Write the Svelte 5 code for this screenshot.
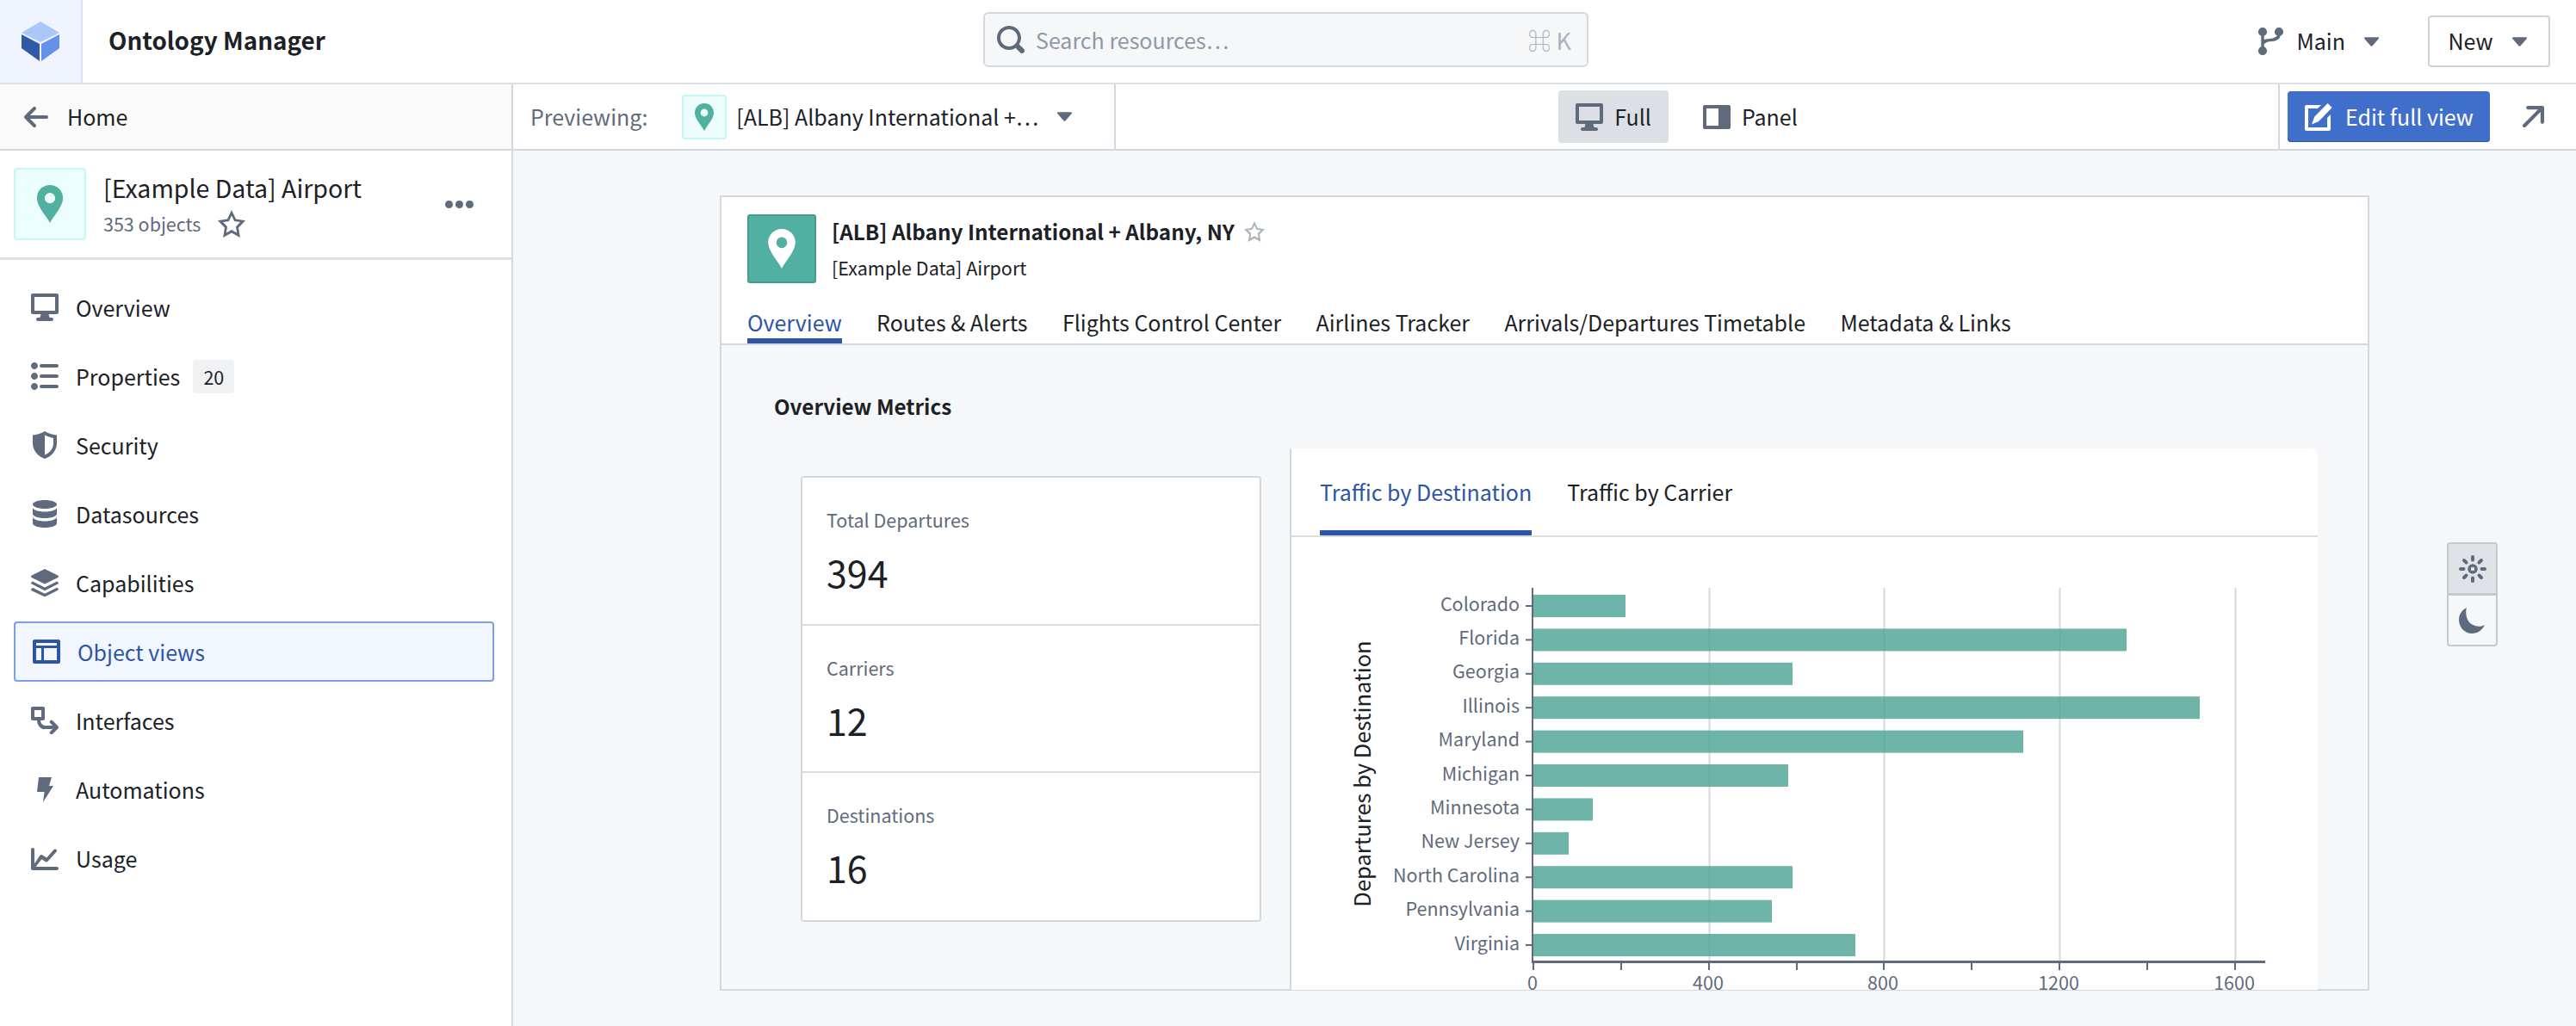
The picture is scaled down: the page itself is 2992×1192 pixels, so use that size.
<script>
  const nav = [
    { label: 'Overview', icon: 'desktop' },
    { label: 'Properties', icon: 'props', badge: '20' },
    { label: 'Security', icon: 'shield' },
    { label: 'Datasources', icon: 'db' },
    { label: 'Capabilities', icon: 'layers' },
    { label: 'Object views', icon: 'layout', active: true },
    { label: 'Interfaces', icon: 'iface' },
    { label: 'Automations', icon: 'bolt' },
    { label: 'Usage', icon: 'chart' }
  ];
  const tabs = ['Overview', 'Routes & Alerts', 'Flights Control Center', 'Airlines Tracker', 'Arrivals/Departures Timetable', 'Metadata & Links'];
  const metrics = [
    { label: 'Total Departures', value: '394' },
    { label: 'Carriers', value: '12' },
    { label: 'Destinations', value: '16' }
  ];
  const bars = [
    ['Colorado', 107], ['Florida', 689], ['Georgia', 301], ['Illinois', 774], ['Maryland', 569],
    ['Michigan', 296], ['Minnesota', 69], ['New Jersey', 41], ['North Carolina', 301], ['Pennsylvania', 277], ['Virginia', 374]
  ];
  const gridX = [204, 407, 611, 815];
  const xLabels = [[0, '0'], [204, '400'], [407, '800'], [611, '1200'], [815, '1600']];
  const minor = [0, 102, 204, 306, 407, 509, 611, 713, 815];
  const paths = {
    desktop: 'M15 0H1C.45 0 0 .45 0 1v10c0 .55.45 1 1 1h4.75l-.5 2H4c-.55 0-1 .45-1 1s.45 1 1 1h8c.55 0 1-.45 1-1s-.45-1-1-1h-1.25l-.5-2H15c.55 0 1-.45 1-1V1c0-.55-.45-1-1-1zm-1 10H2V2h12v8z',
    props: 'M2 6C.9 6 0 6.9 0 8s.9 2 2 2 2-.9 2-2-.9-2-2-2zm4-3h9c.55 0 1-.45 1-1s-.45-1-1-1H6c-.55 0-1 .45-1 1s.45 1 1 1zm-4 9c-1.1 0-2 .9-2 2s.9 2 2 2 2-.9 2-2-.9-2-2-2zM2 0C.9 0 0 .9 0 2s.9 2 2 2 2-.9 2-2-.9-2-2-2zm13 7H6c-.55 0-1 .45-1 1s.45 1 1 1h9c.55 0 1-.45 1-1s-.45-1-1-1zm0 6H6c-.55 0-1 .45-1 1s.45 1 1 1h9c.55 0 1-.45 1-1s-.45-1-1-1z',
    shield: 'M8 0C6 1.2 3.5 2 1 2.2V7c0 4 3 7.600 7 9 4-1.400 7-5 7-9V2.200C12.500 2 10 1.200 8 0zm0 2.300c1.500.8 3.200 1.400 5 1.700V7c0 2.900-2 5.500-5 6.800V2.300z',
    db: 'M8 5c3.900 0 7-1.100 7-2.500S11.900 0 8 0 1 1.100 1 2.500 4.100 5 8 5zm0 1.700C4.100 6.700 1 5.600 1 4.200V8c0 1.400 3.100 2.500 7 2.500S15 9.400 15 8V4.200c0 1.400-3.100 2.500-7 2.500zm0 5.500c-3.900 0-7-1.100-7-2.500v3.800C1 14.900 4.100 16 8 16s7-1.100 7-2.500V9.700c0 1.400-3.100 2.500-7 2.500z',
    layers: 'M8 0 .4 3.800c-.5.3-.5.9 0 1.200L8 8.800 15.600 5c.5-.3.5-.9 0-1.200L8 0zM1 7.300l-.6.300c-.5.3-.5.9 0 1.200L8 12.600l7.600-3.800c.5-.3.5-.9 0-1.200l-.6-.3-7 3.500-7-3.500zm0 3.800-.6.300c-.5.300-.5.900 0 1.200L8 16.200l7.600-3.800c.5-.3.5-.9 0-1.200l-.6-.3-7 3.500-7-3.500z',
    layout: 'M15 1H1c-.5 0-1 .5-1 1v12c0 .5.5 1 1 1h14c.5 0 1-.5 1-1V2c0-.5-.5-1-1-1zM2 6h3v7H2V6zm12 7H6.500V6H14v7zM2 4.500V3h12v1.500H2z',
    iface: 'M1 0h6c.6 0 1 .4 1 1v6c0 .6-.4 1-1 1H5.500c.2 1.800 1.300 3 3 3h4.100l-1.300-1.300a1 1 0 1 1 1.400-1.400l3 3c.4.400.4 1 0 1.400l-3 3a1 1 0 1 1-1.400-1.400l1.300-1.300H8.500C5.500 13.500 3.700 11 3.500 8H1c-.6 0-1-.4-1-1V1c0-.6.4-1 1-1zm1 2v4h4V2H2z',
    bolt: 'M4.500 1h7.500L10.500 6h2.500L7 15.500l.8-6H3.500L4.500 1z',
    chart: 'M1 2c.6 0 1 .4 1 1v8.200l3.300-4.900c.2-.3.6-.4 1-.3l2.800 1.700L13.300 3c.4-.4 1-.4 1.400 0s.4 1 0 1.400l-5 5.500c-.3.3-.8.4-1.200.2L6.200 8.600 2.800 13H15c.6 0 1 .4 1 1s-.4 1-1 1H1c-.6 0-1-.4-1-1V3c0-.6.4-1 1-1z'
  };
  const pin = 'M8 0C4.900 0 2.500 2.400 2.500 5.500 2.500 9 6.500 13 8 16c1.500-3 5.500-7 5.500-10.500C13.500 2.400 11.100 0 8 0zm0 7.700a2.200 2.200 0 1 1 0-4.400 2.200 2.200 0 0 1 0 4.400z';
  const star = 'M16 6.110l-5.530-.84L8 0 5.530 5.270 0 6.110l4 4.100L3.060 16 8 13.270 12.940 16 12 10.210l4-4.100zM4.910 13.200l.59-3.620L3 7.020l3.450-.53L8 3.200l1.550 3.290 3.450.53-2.500 2.560.59 3.620L8 11.490 4.910 13.200z';
  const caret = 'M12 6.500c0-.28-.22-.5-.5-.5h-7a.495.495 0 00-.37.83l3.500 4c.09.1.22.17.37.17s.28-.07.37-.17l3.500-4c.08-.09.13-.2.13-.33z';
</script>

<div class="app">
  <header class="top">
    <div class="logo">
      <svg viewBox="0 0 44 46" width="44" height="46">
        <polygon points="22,0 44,13 22,24 0,13" fill="#abc7f8" />
        <polygon points="0,15 21,26 21,46 0,31" fill="#3159aa" />
        <polygon points="44,15 23,26 23,46 44,31" fill="#6691e8" />
      </svg>
    </div>
    <div class="app-title">Ontology Manager</div>
    <div class="search">
      <svg class="search-ic" viewBox="0 0 16 16"><path d="M15.550 13.430l-2.670-2.680a6.940 6.940 0 001.110-3.760c0-3.870-3.130-7-7-7s-7 3.130-7 7 3.130 7 7 7c1.390 0 2.680-.42 3.760-1.110l2.680 2.670a1.498 1.498 0 102.120-2.120zm-8.560-1.440c-2.760 0-5-2.240-5-5s2.240-5 5-5 5 2.240 5 5-2.240 5-5 5z" /></svg>
      <span class="ph">Search resources…</span>
      <span class="kbd">⌘ K</span>
    </div>
    <div class="top-right">
      <svg class="ic branch" viewBox="0 0 16 16" fill="none" stroke="#5f6b7c" stroke-width="1.700"><circle cx="3.500" cy="2.500" r="1.700" /><circle cx="3.500" cy="13.500" r="1.700" /><circle cx="13" cy="2.500" r="1.700" /><path d="M3.500 4.200v7.600M3.500 10c0-2 1-2.500 4-2.700 3.500-.2 5.500-1 5.500-3.100" /></svg>
      <span class="main-l">Main</span>
      <svg class="caret" viewBox="4 6 8 5"><path d={caret} /></svg>
      <div class="new"><span>New</span> <svg class="caret" viewBox="4 6 8 5"><path d={caret} /></svg></div>
    </div>
  </header>

  <div class="body">
    <aside class="side">
      <div class="home">
        <svg class="ic" viewBox="0 0 16 16"><path d="M13.990 6.990H4.410L7.700 3.700a1.003 1.003 0 00-1.420-1.420l-5 5a1.014 1.014 0 000 1.420l5 5a1.003 1.003 0 001.420-1.420L4.410 8.990H14c.55 0 1-.45 1-1s-.46-1-1.010-1z" /></svg>
        <span>Home</span>
      </div>
      <div class="obj">
        <div class="obj-ic"><svg viewBox="0 0 16 16"><path d={pin} fill-rule="evenodd" /></svg></div>
        <div class="obj-text">
          <div class="obj-name">[Example Data] Airport</div>
          <div class="obj-sub">353 objects <svg viewBox="0 0 16 16"><path d={star} /></svg></div>
        </div>
        <div class="dots"><i></i><i></i><i></i></div>
      </div>
      <nav class="nav">
        {#each nav as n}
          <div class="row" class:active={n.active}>
            <svg class="ic" viewBox="0 0 16 16"><path d={paths[n.icon]} fill-rule="evenodd" /></svg>
            <span>{n.label}</span>
            {#if n.badge}<span class="badge">{n.badge}</span>{/if}
          </div>
        {/each}
      </nav>
    </aside>

    <main class="main">
      <div class="sub">
        <div class="preview">
          <span class="pv-l">Previewing:</span>
          <div class="pv-ic"><svg viewBox="0 0 16 16"><path d={pin} fill-rule="evenodd" /></svg></div>
          <span class="pv-t">[ALB] Albany International +…</span>
          <svg class="caret" viewBox="4 6 8 5"><path d={caret} /></svg>
        </div>
        <div class="modes">
          <div class="mode on"><svg class="ic" viewBox="0 0 16 16"><path d={paths.desktop} /></svg><span>Full</span></div>
          <div class="mode"><svg class="ic" viewBox="0 0 16 16"><path fill-rule="evenodd" d="M1 1h14c.6 0 1 .4 1 1v12c0 .6-.4 1-1 1H1c-.6 0-1-.4-1-1V2c0-.6.4-1 1-1zm1 2v10h7V3H2z" /></svg><span>Panel</span></div>
        </div>
        <div class="actions">
          <div class="edit">
            <svg viewBox="0 0 16 16" fill="#fff"><path fill-rule="evenodd" d="M1 1h8.500L7.500 3H2v11h11V8.500l2-2V15c0 .6-.4 1-1 1H1c-.6 0-1-.4-1-1V2c0-.6.4-1 1-1z" /><path d="M13.300 0l2.500 2.500-7.700 8L4 12.200l1.600-4.300 7.700-7.900z" /></svg>
            <span>Edit full view</span>
          </div>
          <svg class="ic ar" viewBox="2 2 12 12"><path d="M13 2H5c-.55 0-1 .45-1 1s.45 1 1 1h5.590L2.300 12.290a1.003 1.003 0 001.420 1.420L12 5.410V11c0 .55.45 1 1 1s1-.45 1-1V3c0-.55-.45-1-1-1z" /></svg>
        </div>
      </div>

      <div class="canvas">
        <section class="card">
          <div class="card-head">
            <div class="ch-top">
              <div class="ch-ic"><svg viewBox="0 0 16 16"><path d={pin} fill-rule="evenodd" /></svg></div>
              <div class="ch-text">
                <div class="ch-title">[ALB] Albany International + Albany, NY <svg viewBox="0 0 16 16"><path d={star} /></svg></div>
                <div class="ch-sub">[Example Data] Airport</div>
              </div>
            </div>
            <div class="tabs">
              {#each tabs as t, i}
                <div class="tab" class:sel={i === 0}>{t}</div>
              {/each}
            </div>
          </div>
          <div class="card-body">
            <h2>Overview Metrics</h2>
            <div class="cols">
              <div class="metrics">
                {#each metrics as m}
                  <div class="metric">
                    <div class="m-l">{m.label}</div>
                    <div class="m-v">{m.value}</div>
                  </div>
                {/each}
              </div>
              <div class="panel">
                <div class="p-tabs">
                  <div class="p-tab sel">Traffic by Destination</div>
                  <div class="p-tab">Traffic by Carrier</div>
                </div>
                <svg class="plot" viewBox="0 0 1190 530" width="1190" height="530">
                  {#each gridX as g}
                    <rect x={g + 280.500} y="59" width="2" height="434" fill="#d5d9de" />
                  {/each}
                  {#each bars as b, i}
                    <text class="yl" x="265" y={i * 39.4 + 85.500} text-anchor="end">{b[0]}</text>
                    <rect x="272" y={i * 39.4 + 79} width="8" height="2" fill="#5f6b7c" />
                    <rect x="281" y={i * 39.4 + 67} width={b[1]} height="26" fill="#4ea396" opacity="0.82" />
                  {/each}
                  <rect x="279" y="59" width="2" height="434" fill="#5f6b7c" />
                  <rect x="279" y="492" width="852" height="3" fill="#5f6b7c" />
                  {#each minor as t}
                    <rect x={t + 280} y="494" width="2" height="9" fill="#5f6b7c" />
                  {/each}
                  {#each xLabels as l}
                    <text class="xl" x={l[0] + 280} y="526" text-anchor="middle">{l[1]}</text>
                  {/each}
                  <text class="ttl" transform="translate(92 275) rotate(-90)" text-anchor="middle">Departures by Destination</text>
                </svg>
              </div>
            </div>
          </div>
        </section>
        <div class="theme">
          <div class="t-btn on">
            <svg viewBox="0 0 32 32"><circle cx="16" cy="16" r="4" fill="none" stroke="#5f6b7c" stroke-width="3.500" /><g stroke="#5f6b7c" stroke-width="4" stroke-linecap="round"><path d="M16 2v3.500M16 26.500V30M2 16h3.500M26.500 16H30M6 6l2.500 2.500M23.500 23.500 26 26M6 26l2.500-2.500M23.500 8.500 26 6" /></g></svg>
          </div>
          <div class="t-btn">
            <svg viewBox="0 0 32 32" fill="#5f6b7c"><path d="M9 1C3 4 0 9 0 15c0 9 7 16 15 16 7 0 12-4 15-10-5 3-12 2-17-2C9 15 7 7 9 1z" /></svg>
          </div>
        </div>
      </div>
    </main>
  </div>
</div>

<style>
  :global(body) { margin: 0; }
  .app {
    width: 2992px; height: 1192px; overflow: hidden; display: flex; flex-direction: column; white-space: nowrap;
    font-family: "Noto Sans CJK SC", "Noto Sans", sans-serif; font-size: 25px; color: #1c2127; background: #fff;
  }
  svg { display: block; flex: none; }
  .ic { width: 32px; height: 32px; fill: #5f6b7c; }
  .caret { width: 17px; height: 11px; fill: #5f6b7c; }

  .top { height: 96px; border-bottom: 2px solid #dce0e5; display: flex; align-items: center; flex: none; position: relative; }
  .logo { width: 94px; height: 96px; background: #eff4fe; border-right: 2px solid #d7e3f8; display: flex; align-items: center; justify-content: center; flex: none; }
  .app-title { margin-left: 30px; font-size: 27.800px; font-weight: 600; line-height: 92px; height: 96px; }
  .search {
    position: absolute; left: 1142px; top: 14px; width: 699px; height: 60px; border: 2px solid #d3d8de; border-radius: 6px;
    background: #f6f7f9; display: flex; align-items: center;
  }
  .search-ic { width: 32px; height: 32px; fill: #5f6b7c; margin-left: 14px; }
  .ph { margin-left: 13px; color: #8f99a8; }
  .kbd { margin-left: auto; margin-right: 18px; color: #abb3bf; font-size: 27px; }
  .top-right { margin-left: auto; margin-right: 30px; display: flex; align-items: center; }
  .branch { width: 32px; height: 32px; margin-right: 14px; }
  .main-l { margin-right: 22px; padding-bottom: 3px; }
  .new { margin-left: 57px; width: 134px; height: 56px; border: 2px solid #d3d3d3; border-radius: 4px; display: flex; align-items: center; justify-content: center; gap: 22px; padding-right: 4px; }
  .new span { padding-bottom: 3px; }

  .body { flex: 1; display: flex; min-height: 0; }
  .side { width: 594px; border-right: 2px solid #d3d8de; flex: none; display: flex; flex-direction: column; }
  .home { height: 75px; border-bottom: 2px solid #d3d8de; background: #fafafa; display: flex; align-items: center; padding-left: 26px; gap: 20px; }
  .home span { padding-bottom: 2px; }
  .obj { height: 124px; border-bottom: 3px solid #dce0e5; display: flex; align-items: center; padding-left: 16px; }
  .obj-ic { width: 80px; height: 80px; border: 2px solid #c6f7f5; border-radius: 4px; background: #ebfdfc; display: flex; align-items: center; justify-content: center; }
  .obj-ic svg { width: 44px; height: 44px; fill: #51b0a2; }
  .obj-text { margin-left: 20px; padding-top: 2px; }
  .obj-name { font-size: 28.500px; line-height: 44px; }
  .obj-sub { font-size: 21.500px; color: #5f6b7c; display: flex; align-items: center; gap: 20px; line-height: 40px; }
  .obj-sub svg { width: 32px; height: 32px; fill: #5f6b7c; }
  .dots { margin-left: auto; margin-right: 44px; display: flex; gap: 3px; }
  .dots i { width: 9px; height: 9px; border-radius: 50%; background: #5f6b7c; }
  .nav { padding: 20px 20px 0 16px; display: flex; flex-direction: column; gap: 10px; }
  .row { height: 70px; box-sizing: border-box; display: flex; align-items: center; padding-left: 20px; gap: 20px; border: 2px solid transparent; border-radius: 4px; margin-left: -2px; }
  .row.active { margin-left: 0; background: #f2f6fe; border-color: #7b9fe8; color: #2d55a5; }
  .row.active .ic { fill: #2d55a5; }
  .badge { background: #f0f1f3; border-radius: 4px; font-size: 21.500px; width: 48px; height: 39px; display: flex; align-items: center; justify-content: center; margin-left: -5px; }

  .main { flex: 1; display: flex; flex-direction: column; min-width: 0; background: #f6f7f9; }
  .sub { height: 75px; border-bottom: 2px solid #d3d8de; background: #fff; display: flex; flex: none; }
  .preview { border-right: 2px solid #d3d8de; display: flex; align-items: center; padding-left: 20px; flex: none; width: 678px; }
  .pv-l { color: #5f6b7c; margin-right: 40px; padding-bottom: 2px; }
  .pv-ic { width: 48px; height: 48px; border: 2px solid #c6f7f5; border-radius: 3px; background: #ebfdfc; display: flex; align-items: center; justify-content: center; }
  .pv-ic svg { width: 32px; height: 32px; fill: #51b0a2; }
  .pv-t { margin: 0 22px 0 11px; padding-bottom: 2px; }
  .modes { flex: 1; display: flex; justify-content: center; align-items: center; gap: 20px; padding-right: 24px; }
  .mode { height: 61px; padding: 0 20px; border-radius: 4px; display: flex; align-items: center; gap: 13px; }
  .mode span { padding-bottom: 2px; }
  .mode.on { background: #dce0e5; }
  .actions { width: 346px; box-sizing: border-box; border-left: 2px solid #d3d8de; display: flex; align-items: center; padding-left: 9px; flex: none; gap: 38px; }
  .edit { width: 235px; height: 59px; background: #406fcb; border-radius: 4px; color: #fff; display: flex; align-items: center; padding-left: 20px; gap: 15px; box-sizing: border-box; box-shadow: inset 0 -1px 0 #2d55a5; }
  .edit span { padding-bottom: 2px; }
  .edit svg { width: 32px; height: 32px; }
  .ar { width: 25px; height: 25px; }

  .canvas { flex: 1; position: relative; padding: 52px 0 0 240px; min-height: 0; }
  .card { width: 1912px; height: 920px; border: 2px solid #d3d8de; display: flex; flex-direction: column; }
  .card-head { background: #fff; border-bottom: 2px solid #d3d8de; padding: 20px 0 0 30px; flex: none; height: 150px; }
  .ch-top { display: flex; gap: 18px; height: 105px; }
  .ch-ic { width: 76px; height: 76px; background: #51b0a2; border: 2px solid #479c90; border-radius: 3px; display: flex; align-items: center; justify-content: center; }
  .ch-ic svg { width: 46px; height: 46px; fill: #fff; }
  .ch-text { margin-top: -1px; }
  .ch-title { font-size: 24.300px; font-weight: 600; display: flex; align-items: center; gap: 11px; line-height: 42px; }
  .ch-title svg { width: 24px; height: 24px; fill: #abb3bf; }
  .ch-sub { font-size: 21.500px; line-height: 42px; }
  .tabs { display: flex; gap: 40.400px; }
  .tab { height: 45px; line-height: 40px; }
  .tab.sel { color: #2d55a5; border-bottom: 6px solid #2d55a5; height: 39px; }
  .card-body { flex: 1; min-height: 0; padding-left: 61px; position: relative; }
  h2 { margin: 0; font-size: 24.200px; font-weight: 600; line-height: 40px; padding-top: 51px; height: 69px; }
  .cols { display: flex; }
  .metrics { margin: 32px 0 0 31px; width: 531px; height: 514px; border: 2px solid #d3d8de; border-radius: 4px; background: #fff; }
  .metric { height: 169.500px; padding-left: 28px; border-bottom: 2px solid #dcdcdc; }
  .metric:last-child { border-bottom: 0; }
  .m-l { font-size: 21.500px; color: #5f6b7c; line-height: 34px; padding-top: 32px; }
  .m-v { font-size: 43px; line-height: 64px; margin-top: 11px; }
  .panel { margin-left: 33px; width: 1192px; height: 629px; background: #fff; border-left: 2px solid #d3d8de; border-radius: 0 8px 0 0; }
  .p-tabs { height: 101px; border-bottom: 2px solid #dcdcdc; display: flex; gap: 41px; padding-left: 33px; }
  .p-tab { height: 101px; line-height: 100px; box-sizing: border-box; }
  .p-tab.sel { color: #2d55a5; border-bottom: 6px solid #2d55a5; }
  .yl, .xl { font-size: 21.500px; fill: #5f6b7c; }
  .ttl { font-size: 25.500px; fill: #1c2127; }
  .theme { position: absolute; left: 2246px; top: 455px; width: 59px; border: 2px solid #c5c8cc; border-radius: 4px; background: #f6f7f9; box-sizing: border-box; }
  .t-btn { height: 57px; display: flex; align-items: center; justify-content: center; }
  .t-btn.on { background: #dfe2e6; border-bottom: 3px solid #c5c8cc; }
  .t-btn svg { width: 32px; height: 32px; }
</style>
